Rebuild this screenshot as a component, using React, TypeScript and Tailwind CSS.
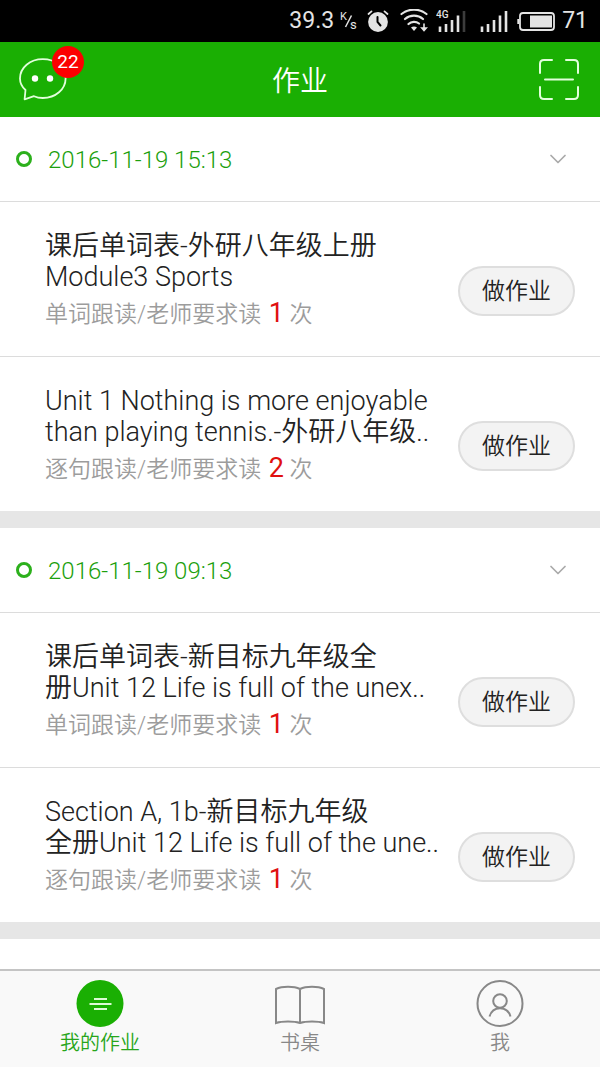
import { ChevronDown } from 'lucide-react'

type Task = {
  id: number
  title: string[]
  kind: string
  times: number
}

type Group = {
  date: string
  tasks: Task[]
}

const groups: Group[] = [
  {
    date: '2016-11-19 15:13',
    tasks: [
      { id: 1, title: ['课后单词表-外研八年级上册', 'Module3 Sports'], kind: '单词跟读', times: 1 },
      {
        id: 2,
        title: ['Unit 1 Nothing is more enjoyable', 'than playing tennis.-外研八年级..'],
        kind: '逐句跟读',
        times: 2,
      },
    ],
  },
  {
    date: '2016-11-19 09:13',
    tasks: [
      {
        id: 3,
        title: ['课后单词表-新目标九年级全', '册Unit 12 Life is full of the unex..'],
        kind: '单词跟读',
        times: 1,
      },
      {
        id: 4,
        title: ['Section A, 1b-新目标九年级', '全册Unit 12 Life is full of the une..'],
        kind: '逐句跟读',
        times: 1,
      },
    ],
  },
]

function StatusBar() {
  return (
    <div className="flex h-[42px] shrink-0 items-center justify-end bg-black pr-3 text-[23px] text-[#e4e4e4]">
      <span>39.3</span>
      <svg className="ml-1.5 h-7 w-5" viewBox="0 0 20 28" fill="currentColor" aria-label="K/s">
        <text x="0" y="13" fontSize="11">K</text>
        <path d="M11.500 8.500 5.500 20" stroke="currentColor" strokeWidth="1.5" />
        <text x="10" y="22" fontSize="13">s</text>
      </svg>
      <svg className="ml-1.5 h-6 w-6" viewBox="0 0 24 24" fill="none" strokeLinecap="round">
        <circle cx="12" cy="13" r="9.9" fill="currentColor" />
        <path d="m2.5 5 3-2.6M21.5 5l-3-2.6" stroke="currentColor" strokeWidth="1.8" />
        <path d="M11.5 8v5l3 3.5" stroke="#000" strokeWidth="2" />
      </svg>
      <svg className="ml-2.5 h-6 w-7" viewBox="0 0 28 24" fill="none" stroke="currentColor" strokeWidth="2.2" strokeLinecap="round">
        <path d="M1.5 5C9-.8 19-.8 26.5 5M5 10c5-4.4 13-4.4 18 0M8.5 15c3-2.800 7.500-2.800 10.500-.5" />
        <path d="m14 22-3-3.6c1.8-1.2 4.2-1.2 6 0z" fill="currentColor" stroke="none" />
        <path d="M24 15v5M21.8 19l2.2 2.5 2.2-2.5z" strokeWidth="1.6" fill="currentColor" />
      </svg>
      <svg className="ml-2 h-6 w-8" viewBox="0 0 32 24" fill="none" stroke="currentColor" strokeWidth="2.6">
        <text x="0" y="9" fontSize="10" fontWeight="500" fill="currentColor" stroke="none">4G</text>
        <path d="M4 17.5V23M10 15v8M16 11v12M22 6.5V23" />
        <path d="M28 2v21" stroke="#3c3c3c" />
      </svg>
      <svg className="ml-3 h-6 w-7" viewBox="0 0 28 24" fill="none" stroke="currentColor" strokeWidth="2.6">
        <path d="M2 17.5V23M8 15v8M14 11v12M20 6.5V23M26 2v21" />
      </svg>
      <svg className="ml-2 h-6 w-10" viewBox="0 0 40 24" fill="none">
        <rect x="4" y="4" width="34" height="17" rx="3" stroke="currentColor" strokeWidth="1.8" />
        <path d="M2.3 10v5" stroke="currentColor" strokeWidth="2" />
        <rect x="14" y="6.5" width="22" height="12" fill="currentColor" />
      </svg>
      <span className="ml-1.5">71</span>
    </div>
  )
}

function Header() {
  return (
    <header className="flex h-[75px] shrink-0 items-center justify-between bg-[#1aaf03] px-[19px] text-white">
      <button type="button" aria-label="消息" className="relative">
        <svg className="h-11 w-12" viewBox="0 0 48 44" fill="none" stroke="#e2ffdc" strokeWidth="1.8" strokeLinejoin="round">
          <path d="M6.5 32C2.8 28.8 1 24.8 1 20.5 1 9.7 11 1.2 23.8 1.2S46.6 9.7 46.6 20.5 36.6 40 23.8 40c-3.2 0-6.2-.6-8.8-1.8L5.6 41.3z" />
          <circle cx="16" cy="20.5" r="3.2" fill="#fff" stroke="none" />
          <circle cx="31" cy="20.5" r="3.2" fill="#fff" stroke="none" />
        </svg>
        <span className="absolute -top-3 left-[33px] flex size-8 items-center justify-center rounded-full bg-[#fc0000] pt-0.5 text-[19px] font-normal">
          22
        </span>
      </button>
      <h1 className="pt-1 text-[28px] font-[350]">作业</h1>
      <button type="button" aria-label="扫一扫" className="flex w-12 justify-end">
        <svg className="h-11 w-11" viewBox="0 0 44 44" fill="none" stroke="#e2ffdc" strokeWidth="2" strokeLinecap="round">
          <path d="M3 15V6q0-4 4-4h8M29 2h8q4 0 4 4v9M41 29v8q0 4-4 4h-8M15 41H7q-4 0-4-4v-8M8 21.5h28" />
        </svg>
      </button>
    </header>
  )
}

function TaskRow({ task }: { task: Task }) {
  return (
    <li className="flex items-end justify-between border-t border-[#dcdcdc] pt-[29px] pr-[25px] pb-[23px] pl-[45px]">
      <div className="whitespace-nowrap">
        <h2 className="text-[27px] leading-[31px] font-[350] text-[#222]">
          {task.title.map((line) => (
            <span key={line} className="block">
              {line}
            </span>
          ))}
        </h2>
        <p className="mt-1 text-[23px] leading-9 font-[350] text-[#9c9c9c]">
          {task.kind}/老师要求读{' '}
          <span className="ml-0.5 text-[27px] leading-none font-normal text-[#e01010]">{task.times}</span> 次
        </p>
      </div>
      <button
        type="button"
        className="mb-[17px] h-[50px] w-[117px] shrink-0 rounded-full border-2 border-[#dedede] bg-[#f3f3f3] pt-0.5 text-[23px] font-[350] text-[#222]"
      >
        做作业
      </button>
    </li>
  )
}

function TaskGroup({ group }: { group: Group }) {
  return (
    <section className="border-b-[17px] border-[#e6e6e6]">
      <button type="button" className="flex h-[84px] w-full items-center pr-7 pl-4 text-[#1c9f0d]">
        <span className="size-4 rounded-full border-3 border-[#2cb01c]" />
        <span className="ml-4 pt-0.5 text-[24px] font-[350]">{group.date}</span>
        <ChevronDown className="ml-auto size-7 text-[#aaa]" strokeWidth={1.5} />
      </button>
      <ul>
        {group.tasks.map((task) => (
          <TaskRow key={task.id} task={task} />
        ))}
      </ul>
    </section>
  )
}

function TabBar() {
  return (
    <nav className="grid shrink-0 grid-cols-3 border-t-2 border-[#c4c4c4] bg-[#f9f9f9] pt-2 pb-2 text-xl font-[350] text-[#888]">
      <a href="#homework" className="flex flex-col items-center text-[#27a51a]" aria-current="page">
        <svg className="size-12" viewBox="0 0 48 48">
          <circle cx="24" cy="24.5" r="23.5" fill="#1aaf03" />
          <path d="M18 20h13M13.5 25h22M18 30h13" stroke="#dcfbd6" strokeWidth="2.2" />
        </svg>
        <span className="leading-8">我的作业</span>
      </a>
      <a href="#desk" className="flex flex-col items-center">
        <svg className="h-12 w-[52px]" viewBox="0 0 52 48" fill="none" stroke="#888" strokeWidth="2">
          <path d="M26 10C20 7 8 7 2 10v34c6-2 18-2 24 0 6-2 18-2 24 0V10c-6-3-18-3-24 0zM26 10v34" />
        </svg>
        <span className="leading-8">书桌</span>
      </a>
      <a href="#me" className="flex flex-col items-center">
        <svg className="size-12" viewBox="0 0 48 48" fill="none" stroke="#888" strokeWidth="2">
          <circle cx="24" cy="24.5" r="22.5" />
          <circle cx="24" cy="22" r="6.8" />
          <path d="M13.5 37.5C15 32.5 19 29.2 24 29.2s9 3.3 10.5 8.3" />
        </svg>
        <span className="leading-8">我</span>
      </a>
    </nav>
  )
}

export default function App() {
  return (
    <div className="flex h-screen flex-col overflow-hidden bg-white font-[Roboto,'Noto_Sans_CJK_SC',sans-serif]">
      <StatusBar />
      <Header />
      <main className="min-h-0 flex-1 overflow-hidden">
        {groups.map((group) => (
          <TaskGroup key={group.date} group={group} />
        ))}
      </main>
      <TabBar />
    </div>
  )
}
